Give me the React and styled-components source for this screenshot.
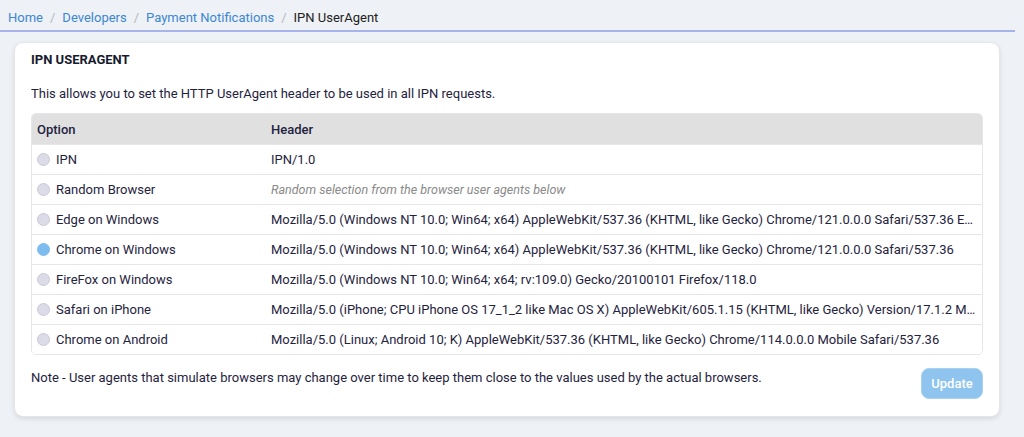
import styled, { createGlobalStyle } from 'styled-components';

const colors = {
    page: '#eef1f5',
    text: '#1f2340',
    link: '#3c87d4',
    rule: '#a7b4ea',
    headBg: '#e0e0e0',
    rowLine: '#e6e6e6',
    radio: '#dcdce8',
    radioOn: '#7dbcee',
    button: '#8ec4ee',
};

const GlobalStyle = createGlobalStyle`
    body {
        margin: 0;
        background: ${colors.page};
        font-family: Roboto, 'Liberation Sans', sans-serif;
        color: ${colors.text};
    }
`;

const Page = styled.div`
    width: 1024px;
    height: 437px;
    overflow: hidden;
`;

const Breadcrumb = styled.nav`
    display: flex;
    align-items: center;
    height: 32px;
    box-sizing: border-box;
    padding-top: 4px;
    margin-right: 9px;
    padding-left: 8px;
    border-bottom: 2px solid ${colors.rule};
    font-size: 13px;
`;

const Crumb = styled.span`
    color: ${(props) => (props.$current ? '#222' : colors.link)};
`;

const Separator = styled.span`
    color: #b5b8bf;
    margin: 0 7px;
`;

const Card = styled.section`
    margin: 10px 24px 0 14px;
    padding: 10px 16px 17px 16px;
    background: #fff;
    border: 1px solid #e4e6ea;
    border-radius: 9px;
    box-shadow: 0 2px 5px rgba(0, 0, 0, 0.1);
`;

const Title = styled.h2`
    margin: 0;
    font-size: 13px;
    font-weight: 700;
    line-height: 14px;
    color: #161a2e;
`;

const Description = styled.p`
    margin: 19px 0 11px;
    font-size: 13px;
    line-height: 16px;
`;

const Table = styled.div`
    border: 1px solid ${colors.rowLine};
    border-radius: 5px;
    overflow: hidden;
`;

const Row = styled.div`
    display: grid;
    grid-template-columns: 234px 1fr;
    align-items: center;
    height: ${(props) => (props.$head ? '30px' : '29px')};
    background: ${(props) => (props.$head ? colors.headBg : '#fff')};
    border-top: ${(props) => (props.$head ? 'none' : `1px solid ${colors.rowLine}`)};
    font-size: 13px;
    font-weight: ${(props) => (props.$head ? 500 : 400)};
`;

const OptionCell = styled.label`
    display: flex;
    align-items: center;
    gap: 6px;
    padding-left: 5px;
`;

const HeadCell = styled.div`
    padding-left: 5px;
`;

const HeaderCell = styled.div`
    padding: 0 4px 0 5px;
    white-space: nowrap;
    overflow: hidden;
    text-overflow: ellipsis;
    font-style: ${(props) => (props.$muted ? 'italic' : 'normal')};
    color: ${(props) => (props.$muted ? '#8a8a8a' : colors.text)};
    font-size: ${(props) => (props.$muted ? '12.5px' : '13px')};
`;

const Radio = styled.span`
    width: 13px;
    height: 13px;
    border-radius: 50%;
    box-sizing: border-box;
    background: ${(props) => (props.$on ? colors.radioOn : colors.radio)};
    border: 1px solid ${(props) => (props.$on ? colors.radioOn : '#c9c9d8')};
`;

const Footer = styled.div`
    display: flex;
    justify-content: space-between;
    align-items: flex-start;
    margin-top: 13px;
`;

const Note = styled.p`
    margin: 2px 0 0;
    font-size: 13px;
    line-height: 16px;
`;

const UpdateButton = styled.button`
    width: 62px;
    height: 31px;
    border: 1px solid #a9d2f2;
    border-radius: 8px;
    background: ${colors.button};
    color: #fff;
    font-family: inherit;
    font-size: 13px;
    font-weight: 500;
`;

const agents = [
    { name: 'IPN', header: 'IPN/1.0' },
    { name: 'Random Browser', header: 'Random selection from the browser user agents below', muted: true },
    {
        name: 'Edge on Windows',
        header: 'Mozilla/5.0 (Windows NT 10.0; Win64; x64) AppleWebKit/537.36 (KHTML, like Gecko) Chrome/121.0.0.0 Safari/537.36 Edg/121.0.0.0',
    },
    {
        name: 'Chrome on Windows',
        header: 'Mozilla/5.0 (Windows NT 10.0; Win64; x64) AppleWebKit/537.36 (KHTML, like Gecko) Chrome/121.0.0.0 Safari/537.36',
        selected: true,
    },
    {
        name: 'FireFox on Windows',
        header: 'Mozilla/5.0 (Windows NT 10.0; Win64; x64; rv:109.0) Gecko/20100101 Firefox/118.0',
    },
    {
        name: 'Safari on iPhone',
        header: 'Mozilla/5.0 (iPhone; CPU iPhone OS 17_1_2 like Mac OS X) AppleWebKit/605.1.15 (KHTML, like Gecko) Version/17.1.2 Mobile/15E148 Safari/604.1',
    },
    {
        name: 'Chrome on Android',
        header: 'Mozilla/5.0 (Linux; Android 10; K) AppleWebKit/537.36 (KHTML, like Gecko) Chrome/114.0.0.0 Mobile Safari/537.36',
    },
];

function App() {
    return (
        <Page>
            <GlobalStyle />
            <Breadcrumb>
                <Crumb>Home</Crumb>
                <Separator>/</Separator>
                <Crumb>Developers</Crumb>
                <Separator>/</Separator>
                <Crumb>Payment Notifications</Crumb>
                <Separator>/</Separator>
                <Crumb $current>IPN UserAgent</Crumb>
            </Breadcrumb>
            <Card>
                <Title>IPN USERAGENT</Title>
                <Description>
                    This allows you to set the HTTP UserAgent header to be used in all IPN requests.
                </Description>
                <Table>
                    <Row $head>
                        <HeadCell>Option</HeadCell>
                        <HeadCell>Header</HeadCell>
                    </Row>
                    {agents.map((agent) => (
                        <Row key={agent.name}>
                            <OptionCell>
                                <Radio $on={agent.selected} />
                                {agent.name}
                            </OptionCell>
                            <HeaderCell $muted={agent.muted}>{agent.header}</HeaderCell>
                        </Row>
                    ))}
                </Table>
                <Footer>
                    <Note>
                        Note - User agents that simulate browsers may change over time to keep them close to the values used by the actual browsers.
                    </Note>
                    <UpdateButton>Update</UpdateButton>
                </Footer>
            </Card>
        </Page>
    );
}

export default App;
